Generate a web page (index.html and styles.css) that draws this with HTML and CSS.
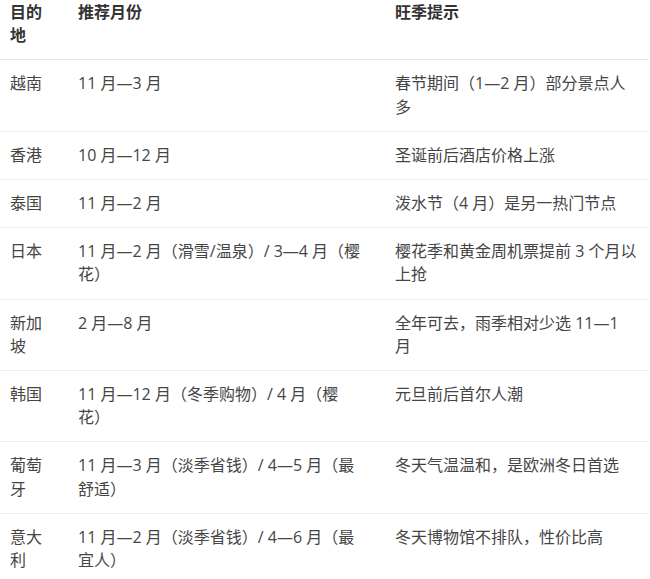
FILE: index.html
```html
<!DOCTYPE html>
<html lang="zh-CN">
<head>
<meta charset="utf-8">
<title>旺季提示</title>
<link rel="stylesheet" href="styles.css">
</head>
<body>
<table class="season-table">
  <colgroup>
    <col class="col-dest">
    <col class="col-month">
    <col class="col-tip">
  </colgroup>
  <thead>
    <tr>
      <th class="c-dest">目的地</th>
      <th class="c-month">推荐月份</th>
      <th class="c-tip">旺季提示</th>
    </tr>
  </thead>
  <tbody>
    <tr>
      <td class="c-dest">越南</td>
      <td class="c-month">11 月—3 月</td>
      <td class="c-tip">春节期间（1—2 月）部分景点人多</td>
    </tr>
    <tr>
      <td class="c-dest">香港</td>
      <td class="c-month">10 月—12 月</td>
      <td class="c-tip">圣诞前后酒店价格上涨</td>
    </tr>
    <tr>
      <td class="c-dest">泰国</td>
      <td class="c-month">11 月—2 月</td>
      <td class="c-tip">泼水节（4 月）是另一热门节点</td>
    </tr>
    <tr>
      <td class="c-dest">日本</td>
      <td class="c-month">11 月—2 月（滑雪/温泉）/ 3—4 月（樱花）</td>
      <td class="c-tip">樱花季和黄金周机票提前 3 个月以上抢</td>
    </tr>
    <tr>
      <td class="c-dest">新加坡</td>
      <td class="c-month">2 月—8 月</td>
      <td class="c-tip">全年可去，雨季相对少选 11—1 月</td>
    </tr>
    <tr>
      <td class="c-dest">韩国</td>
      <td class="c-month">11 月—12 月（冬季购物）/ 4 月（樱花）</td>
      <td class="c-tip">元旦前后首尔人潮</td>
    </tr>
    <tr>
      <td class="c-dest">葡萄牙</td>
      <td class="c-month">11 月—3 月（淡季省钱）/ 4—5 月（最舒适）</td>
      <td class="c-tip">冬天气温温和，是欧洲冬日首选</td>
    </tr>
    <tr>
      <td class="c-dest">意大利</td>
      <td class="c-month">11 月—2 月（淡季省钱）/ 4—6 月（最宜人）</td>
      <td class="c-tip">冬天博物馆不排队，性价比高</td>
    </tr>
  </tbody>
</table>
</body>
</html>
```
FILE: styles.css
```css
html, body {
  margin: 0;
  padding: 0;
  background: #ffffff;
}

body {
  font-family: "Open Sans", "Noto Sans CJK SC", sans-serif;
  font-size: 16px;
  color: #454545;
}

.season-table {
  width: 648px;
  border-collapse: collapse;
  table-layout: fixed;
}

.col-dest { width: 68px; }
.col-month { width: 317px; }
.col-tip { width: 263px; }

.season-table th,
.season-table td {
  text-align: left;
  vertical-align: top;
  line-height: 23.2px;
  padding: 12px 10px 12px 10px;
}

.season-table th {
  font-weight: 700;
  color: #333333;
  padding-top: 1px;
  border-bottom: 1px solid #e8e8e8;
}

.season-table td {
  border-bottom: 1px solid #efefef;
}

.season-table .c-dest {
  padding-right: 12px;
}

.season-table .c-month {
  padding-right: 23.5px;
}

.season-table .c-tip {
  padding-right: 10.5px;
}

.season-table tbody tr:last-child td {
  border-bottom: none;
}
```
